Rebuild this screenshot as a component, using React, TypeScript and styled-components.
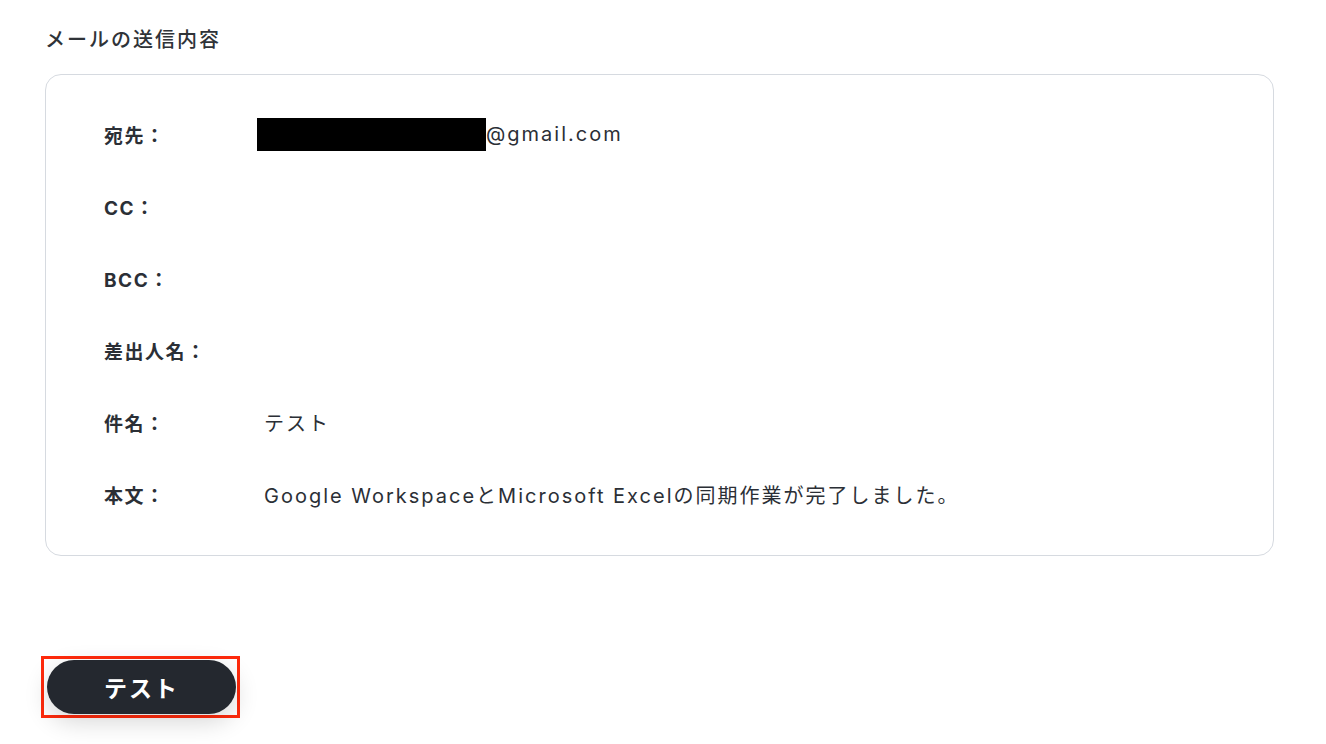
import React from "react";
import styled, { createGlobalStyle } from "styled-components";

const GlobalStyle = createGlobalStyle`
  html, body {
    margin: 0;
    padding: 0;
    background: #ffffff;
  }
  body {
    font-family: Inter, "Noto Sans CJK JP", "Noto Sans", sans-serif;
    color: #2b2f36;
  }
`;

const Page = styled.div`
  width: 1326px;
  height: 744px;
  box-sizing: border-box;
  padding: 27px 53px 0 45px;
  overflow: hidden;
`;

const Title = styled.h2`
  margin: 0 0 20px;
  font-size: 20px;
  font-weight: 500;
  line-height: 27px;
  letter-spacing: 2px;
  color: #2f3338;
`;

const Card = styled.div`
  box-sizing: border-box;
  width: 1229px;
  height: 482px;
  border: 1px solid #d6dae0;
  border-radius: 16px;
  padding: 41px 58px;
  display: flex;
  flex-direction: column;
  gap: 36px;
`;

const Row = styled.div`
  display: flex;
  align-items: center;
  height: 36px;
`;

const Label = styled.div`
  width: 160px;
  flex-shrink: 0;
  font-size: 19px;
  font-weight: 700;
  letter-spacing: 1.5px;
  color: #2b2f36;
`;

const Value = styled.div`
  font-size: 20px;
  font-weight: 400;
  color: #2b2f36;
  display: flex;
  align-items: center;
  letter-spacing: 2px;
`;

const Redacted = styled.span`
  display: inline-block;
  width: 229px;
  height: 33px;
  background: #000;
  margin-left: -7px;
`;

const Footer = styled.div`
  margin-top: 100px;
  display: flex;
`;

const Highlight = styled.div`
  margin-left: -4px;
  border: 3px solid #ff2a0c;
  padding: 1px 1px 1px 3px;
  display: flex;
`;

const TestButton = styled.button`
  width: 189px;
  height: 54px;
  border: none;
  border-radius: 27px;
  background: #24282f;
  color: #ffffff;
  font-family: inherit;
  font-size: 23px;
  font-weight: 700;
  letter-spacing: 2px;
  box-shadow: 0 8px 24px rgba(0, 0, 0, 0.16);
  cursor: pointer;
`;

const rows: { label: string; value?: React.ReactNode }[] = [
  {
    label: "宛先：",
    value: (
      <>
        <Redacted />
        @gmail.com
      </>
    ),
  },
  { label: "CC：" },
  { label: "BCC：" },
  { label: "差出人名：" },
  { label: "件名：", value: "テスト" },
  {
    label: "本文：",
    value: "Google WorkspaceとMicrosoft Excelの同期作業が完了しました。",
  },
];

export default function App() {
  return (
    <>
      <GlobalStyle />
      <Page>
        <Title>メールの送信内容</Title>
        <Card>
          {rows.map((r) => (
            <Row key={r.label}>
              <Label>{r.label}</Label>
              {r.value && <Value>{r.value}</Value>}
            </Row>
          ))}
        </Card>
        <Footer>
          <Highlight>
            <TestButton>テスト</TestButton>
          </Highlight>
        </Footer>
      </Page>
    </>
  );
}
